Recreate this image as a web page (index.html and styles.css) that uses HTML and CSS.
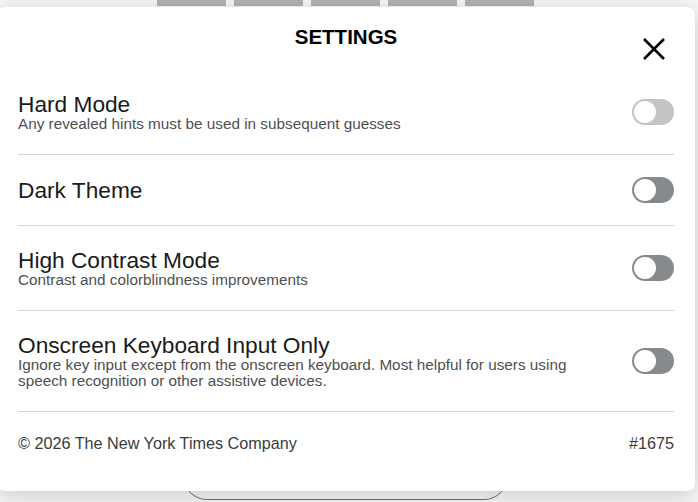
FILE: index.html
```html
<!DOCTYPE html>
<html lang="en">
<head>
<meta charset="utf-8">
<title>Settings</title>
<link rel="stylesheet" href="styles.css">
</head>
<body>
<div class="game">
  <div class="board">
    <div class="tile"></div>
    <div class="tile"></div>
    <div class="tile"></div>
    <div class="tile"></div>
    <div class="tile"></div>
  </div>
  <div class="share-btn"></div>
</div>

<div class="modal" role="dialog" aria-label="Settings">
  <header class="modal-header">
    <span class="spacer"></span>
    <h1 class="modal-title">SETTINGS</h1>
    <button class="close" aria-label="Close">
      <svg width="24" height="24" viewBox="0 0 24 24" aria-hidden="true">
        <path d="M2 2 L22 22 M22 2 L2 22" stroke="#000" stroke-width="2.6" fill="none"/>
      </svg>
    </button>
  </header>

  <section class="setting">
    <div class="setting-text">
      <div class="setting-title">Hard Mode</div>
      <div class="setting-hint">Any revealed hints must be used in subsequent guesses</div>
    </div>
    <div class="switch disabled"><span class="knob"></span></div>
  </section>

  <section class="setting">
    <div class="setting-text">
      <div class="setting-title">Dark Theme</div>
    </div>
    <div class="switch"><span class="knob"></span></div>
  </section>

  <section class="setting">
    <div class="setting-text">
      <div class="setting-title">High Contrast Mode</div>
      <div class="setting-hint">Contrast and colorblindness improvements</div>
    </div>
    <div class="switch"><span class="knob"></span></div>
  </section>

  <section class="setting">
    <div class="setting-text">
      <div class="setting-title">Onscreen Keyboard Input Only</div>
      <div class="setting-hint">Ignore key input except from the onscreen keyboard. Most helpful for users using speech recognition or other assistive devices.</div>
    </div>
    <div class="switch"><span class="knob"></span></div>
  </section>

  <footer class="modal-footer">
    <span>© 2026 The New York Times Company</span>
    <span>#1675</span>
  </footer>
</div>
</body>
</html>
```

FILE: styles.css
```css
html, body {
  margin: 0;
  padding: 0;
}

body {
  width: 698px;
  height: 502px;
  overflow: hidden;
  background: #f8f8f8;
  font-family: "Liberation Sans", Arial, sans-serif;
  color: #1a1a1b;
  position: relative;
}

.game {
  height: 502px;
  box-sizing: border-box;
  padding-right: 7px;
  display: flex;
  flex-direction: column;
  align-items: center;
}

.board {
  display: flex;
  gap: 8px;
  margin-top: -56px;
}

.tile {
  width: 69px;
  height: 62px;
  background: #b4b4b4;
}

.share-btn {
  margin-top: auto;
  margin-bottom: 2px;
  width: 325px;
  height: 48px;
  box-sizing: border-box;
  border: 1.5px solid #6f6f6f;
  border-radius: 26px;
}

.modal {
  position: absolute;
  left: -3px;
  top: 7px;
  width: 698px;
  height: 484px;
  box-sizing: border-box;
  padding: 0 21px;
  background: #fff;
  border-radius: 8px;
  box-shadow: 0 4px 23px 0 rgba(0, 0, 0, 0.2);
}

.modal-header {
  height: 63px;
  box-sizing: border-box;
  padding-top: 18px;
  display: grid;
  grid-template-columns: 1fr auto 1fr;
  align-items: start;
}

.modal-title {
  margin: 0;
  font-size: 20.5px;
  line-height: 24px;
  font-weight: 700;
  color: #000;
  text-align: center;
}

.close {
  justify-self: end;
  margin: 12px 8px 0 0;
  padding: 0;
  border: 0;
  background: none;
  width: 24px;
  height: 24px;
  display: block;
}

.close svg {
  display: block;
}

.setting {
  display: flex;
  align-items: center;
  justify-content: space-between;
  padding: 22px 0;
  border-bottom: 1px solid #d3d6da;
}

.setting-text {
  max-width: 575px;
}

.setting-title {
  font-size: 22.7px;
  line-height: 24px;
  color: #1a1a1b;
}

.setting-hint {
  font-size: 15.3px;
  line-height: 16px;
  color: #4f4f4f;
}

.switch {
  flex: none;
  width: 42px;
  height: 26px;
  box-sizing: border-box;
  padding: 2px;
  border-radius: 13px;
  background: #878a8c;
  display: flex;
  align-items: center;
}

.switch.disabled {
  opacity: 0.5;
}

.knob {
  width: 22px;
  height: 22px;
  border-radius: 50%;
  background: #fff;
}

.modal-footer {
  display: flex;
  justify-content: space-between;
  padding-top: 21px;
  font-size: 16.2px;
  line-height: 20px;
  color: #3c3c3c;
}
```
